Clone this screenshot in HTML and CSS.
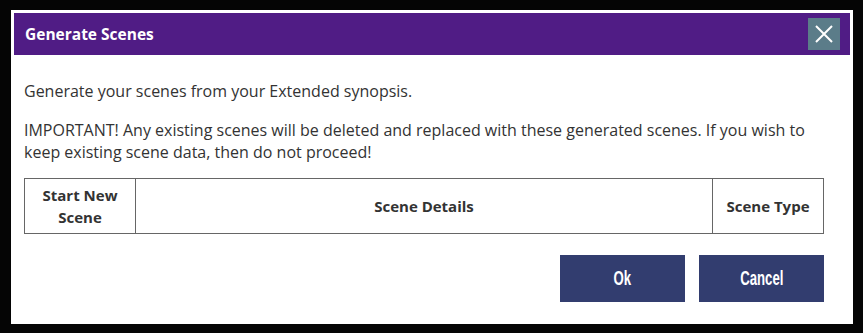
FILE: index.html
```html
<!DOCTYPE html>
<html lang="en">
<head>
  <meta charset="UTF-8">
  <title>Generate Scenes</title>
  <link rel="stylesheet" href="styles.css">
</head>
<body>
  <div class="dialog">
    <div class="dialog-header">
      <h1>Generate Scenes</h1>
      <button class="close-btn" aria-label="Close">
        <svg width="20" height="20" viewBox="0 0 20 20">
          <path d="M2 2 L18 18 M18 2 L2 18" stroke="#fff" stroke-width="2" fill="none"/>
        </svg>
      </button>
    </div>

    <div class="dialog-body">
      <p>Generate your scenes from your Extended synopsis.</p>
      <p>IMPORTANT! Any existing scenes will be deleted and replaced with these generated scenes. If you wish to keep existing scene data, then do not proceed!</p>

      <table class="scenes">
        <thead>
          <tr>
            <th class="col-start">Start New Scene</th>
            <th>Scene Details</th>
            <th class="col-type">Scene Type</th>
          </tr>
        </thead>
      </table>

      <div class="actions">
        <button class="btn"><span>Ok</span></button>
        <button class="btn"><span>Cancel</span></button>
      </div>
    </div>
  </div>
</body>
</html>
```

FILE: styles.css
```css
body {
  margin: 0;
  background-color: #050505;
  font-family: "Open Sans", Arial, sans-serif;
  color: #333;
}
.dialog {
  margin: 10px 0 0 11px;
  width: 842px;
  height: 314px;
  padding: 3px;
  box-sizing: border-box;
  background-color: #fff;
}
.dialog-header {
  background-color: #501c85;
  height: 42px;
  display: flex;
  align-items: center;
  justify-content: space-between;
  padding: 0 10px 0 11px;
}
.dialog-header h1 {
  margin: 0;
  font-size: 15.5px;
  font-weight: bold;
  color: #fff;
}
.close-btn {
  width: 32px;
  height: 32px;
  border: none;
  padding: 0;
  background-color: #5b7c89;
  display: flex;
  align-items: center;
  justify-content: center;
  cursor: pointer;
}
.dialog-body {
  padding: 25px 26px 0 10px;
}
.dialog-body p {
  margin: 0 0 17px;
  font-size: 16px;
  line-height: 22px;
}
.scenes {
  width: 100%;
  border-collapse: collapse;
  margin-top: -2px;
}
.scenes th {
  border: 1px solid #666;
  font-size: 15px;
  line-height: 22px;
  padding: 5px 6px;
  height: 44px;
  box-sizing: border-box;
}
.scenes .col-start {
  width: 111px;
}
.scenes .col-type {
  width: 111px;
}
.actions {
  display: flex;
  justify-content: flex-end;
  gap: 14px;
  margin-top: 21px;
}
.btn {
  width: 125px;
  height: 47px;
  border: none;
  padding: 0;
  background-color: #323d6f;
  color: #fff;
  font-family: "Liberation Sans", Arial, sans-serif;
  font-weight: bold;
  font-size: 20px;
  cursor: pointer;
}
.btn span {
  display: inline-block;
  transform: scaleX(0.66);
}
```
